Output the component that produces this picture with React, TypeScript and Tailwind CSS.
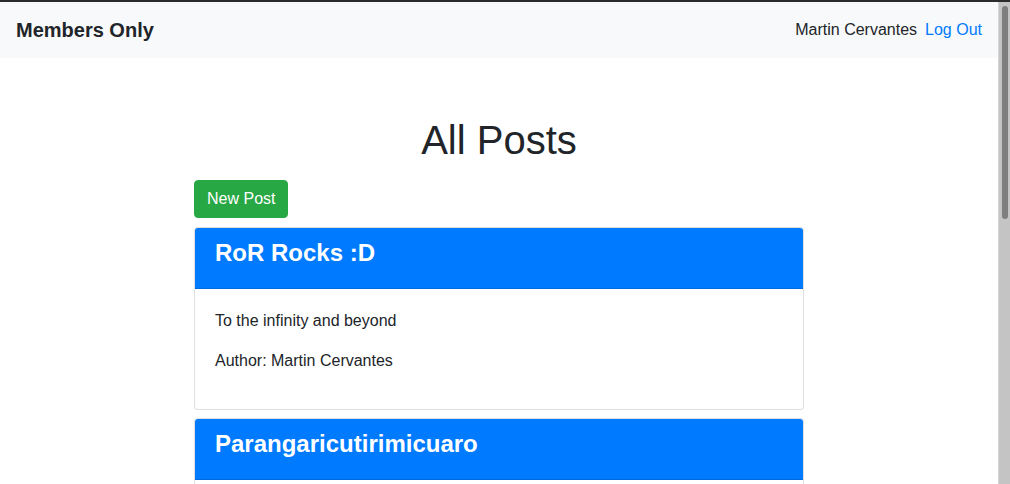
import React from 'react';

type Post = {
  title: string;
  body: string;
  author: string;
};

const posts: Post[] = [
  { title: 'RoR Rocks :D', body: 'To the infinity and beyond', author: 'Martin Cervantes' },
  { title: 'Parangaricutirimicuaro', body: 'Lorem ipsum dolor sit amet', author: 'Martin Cervantes' },
];

const PostCard = ({ post }: { post: Post }) => (
  <div className="mb-[8px] rounded-[4px] border border-black/[0.125] bg-white overflow-hidden">
    <div className="h-[61px] bg-[#007bff] border-b border-black/[0.125] px-[20px] pt-[10px]">
      <h2 className="text-[24px] leading-[29px] font-bold text-white">{post.title}</h2>
    </div>
    <div className="px-[20px] pt-[20px] pb-[20px]">
      <p className="text-[16px] leading-[24px] mb-[16px]">{post.body}</p>
      <p className="text-[16px] leading-[24px] mb-[16px]">Author: {post.author}</p>
    </div>
  </div>
);

export default function App() {
  return (
    <div
      className="h-[484px] w-[1010px] overflow-hidden flex flex-col bg-white text-[#212529]"
      style={{ fontFamily: '"Liberation Sans", Arial, sans-serif' }}
    >
      <div className="h-[2px] bg-[#2b2b2b] shrink-0" />
      <div className="flex flex-1 min-h-0">
        <main className="flex-1 min-w-0 overflow-hidden">
          <nav className="h-[56px] bg-[#f8f9fa] flex items-center justify-between px-[16px]">
            <a className="text-[20px] font-bold leading-[30px] text-[#212529]">Members Only</a>
            <div className="flex items-center gap-[8px] text-[16px] leading-[24px]">
              <span className="text-[#212529]">Martin Cervantes</span>
              <a className="text-[#007bff]">Log Out</a>
            </div>
          </nav>

          <div className="w-[610px] mx-auto">
            <h1 className="mt-[58px] text-center text-[40px] leading-[48px] font-normal">All Posts</h1>
            <div className="flex mt-[16px]">
              <button className="h-[38px] px-[12px] rounded-[4px] bg-[#28a745] border border-[#28a745] text-white text-[16px] leading-[24px]">
                New Post
              </button>
            </div>
            <div className="mt-[9px]">
              {posts.map((p) => (
                <PostCard key={p.title} post={p} />
              ))}
            </div>
          </div>
        </main>

        <aside className="w-[12px] shrink-0 bg-[#c4c4c4] border-l border-[#d6d6d6] pt-[4px] flex justify-center">
          <div className="w-[6px] h-[213px] rounded-full bg-[#7e7e7e]" />
        </aside>
      </div>
    </div>
  );
}
